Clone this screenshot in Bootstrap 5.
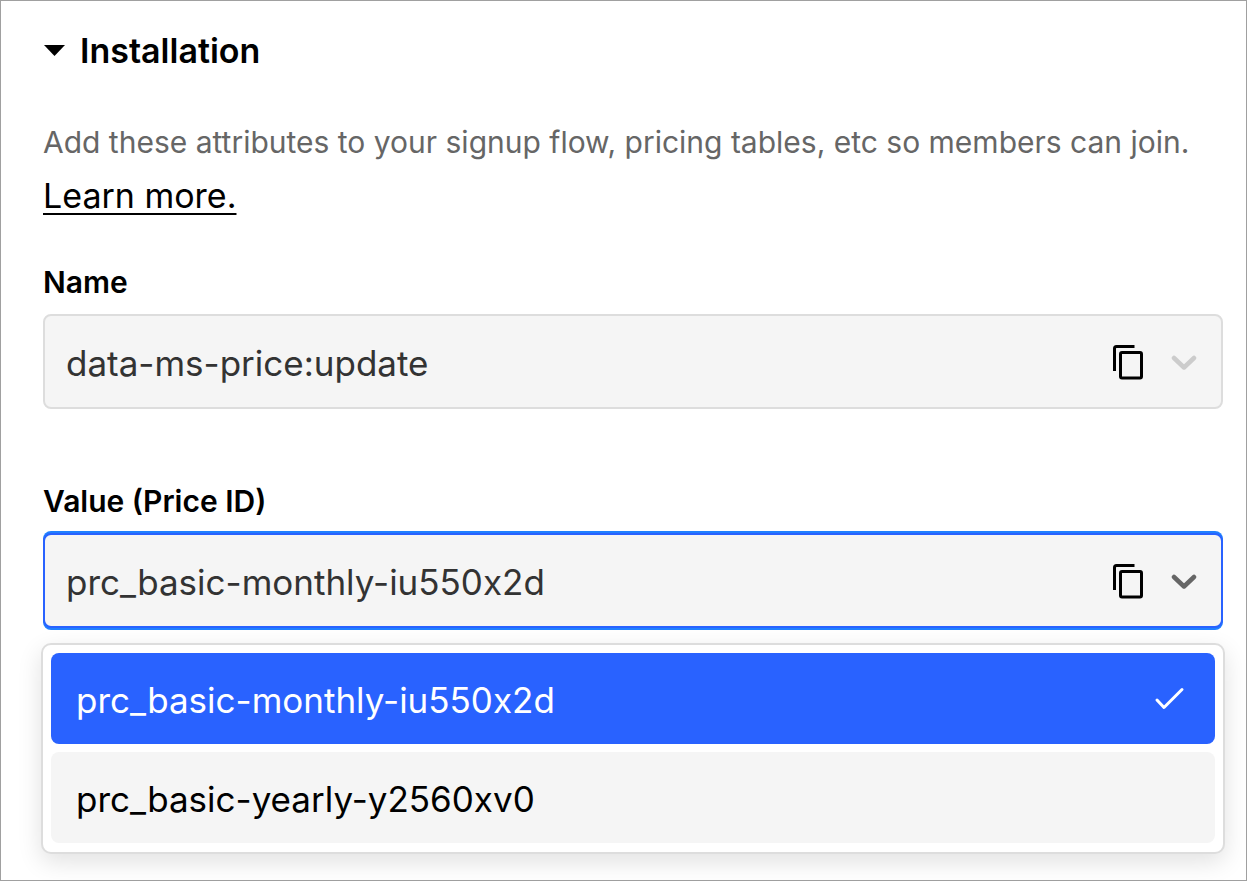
<!DOCTYPE html>
<html lang="en">
<head>
<meta charset="utf-8">
<meta name="viewport" content="width=device-width, initial-scale=1">
<title>Installation</title>
<link href="https://cdn.jsdelivr.net/npm/bootstrap@5.3.0/dist/css/bootstrap.min.css" rel="stylesheet">
<style>
  body { font-family: "Inter", "Liberation Sans", sans-serif; color: #000; background: #fff; }
  .panel { border: 1px solid #a0a0a0; padding: 24px 23px 26px 42px; }
  .panel-title { gap: 15px; font-size: 34px; line-height: 52px; font-weight: 600; margin-bottom: 40px; list-style: none; }
  .intro { font-size: 30px; line-height: 50px; color: #666; margin-bottom: 3px; }
  .learn { font-size: 34px; line-height: 52px; color: #000; text-decoration-thickness: 2px; text-underline-offset: 5px; }
  .field-label { font-size: 30px; line-height: 40px; font-weight: 600; margin-bottom: 12px; }
  .name-field { padding-top: 40px; }
  .value-field { padding-top: 72px; }
  .picker .form-select, .choice { font-size: 35px; line-height: 48px; font-variant-ligatures: no-contextual; }
  .picker .form-select { height: 95px; border: 2px solid #ddd; border-radius: 8px; background: #f5f5f5; color: #333; padding: 3px 140px 0 21px; }
  .picker .form-select.is-open { border-color: #2962ff; box-shadow: 0 -2px #1f80ff, 0 2px #1f80ff; }
  .picker-icons { top: 0; bottom: 0; right: 26px; gap: 23px; }
  .copy-btn { width: 40px; height: 40px; }
  .menu { border: 2px solid #ddd; border-radius: 10px; padding: 8px 8px 9px; gap: 8px; margin: 15px -2px 0; background: #fff; box-shadow: 0 8px 24px rgba(0,0,0,.12); }
  .choice { height: 91px; border: 0; border-radius: 8px; padding: 3px 29px 0 25px; background: #f5f5f5; color: #000; }
  .choice.chosen { background: #2962ff; color: #fff; }
</style>
</head>
<body>
<main class="panel min-vh-100">
  <details open>
    <summary class="panel-title d-flex align-items-center">
      <svg width="22" height="12" viewBox="0 0 22 12" aria-hidden="true"><path d="M1 0H22L11.500 11Z"/></svg>
      <span>Installation</span>
    </summary>
    <p class="intro">Add these attributes to your signup flow, pricing tables, etc so members can join.</p>
    <a class="learn d-inline-block" href="#">Learn more.</a>

    <div class="name-field">
      <label class="field-label d-block" for="attr">Name</label>
      <div class="picker position-relative">
        <select class="form-select" id="attr"><option>data-ms-price:update</option></select>
        <div class="picker-icons position-absolute d-flex align-items-center">
          <button class="copy-btn btn p-0 border-0 d-flex align-items-center justify-content-center" type="button" aria-label="Copy name">
            <svg width="32" height="36" viewBox="0 0 32 36" fill="none" stroke="#000" stroke-width="3"><path d="M2.500 27V4.500Q2.500 2.500 4.500 2.500H22.500"/><rect x="8.500" y="8.500" width="21" height="25.500" rx="1.500"/></svg>
          </button>
          <svg width="26" height="16" viewBox="0 0 26 16" fill="none" stroke="#ccc" stroke-width="4.500" stroke-linecap="round" stroke-linejoin="round" aria-hidden="true"><path d="M3 4L13 13.500L23 4"/></svg>
        </div>
      </div>
    </div>

    <div class="value-field">
      <label class="field-label d-block" for="price">Value (Price ID)</label>
      <div class="picker position-relative">
        <select class="form-select is-open" id="price"><option>prc_basic-monthly-iu550x2d</option><option>prc_basic-yearly-y2560xv0</option></select>
        <div class="picker-icons position-absolute d-flex align-items-center">
          <button class="copy-btn btn p-0 border-0 d-flex align-items-center justify-content-center" type="button" aria-label="Copy value">
            <svg width="32" height="36" viewBox="0 0 32 36" fill="none" stroke="#000" stroke-width="3"><path d="M2.500 27V4.500Q2.500 2.500 4.500 2.500H22.500"/><rect x="8.500" y="8.500" width="21" height="25.500" rx="1.500"/></svg>
          </button>
          <svg width="26" height="16" viewBox="0 0 26 16" fill="none" stroke="#666" stroke-width="4.500" stroke-linecap="round" stroke-linejoin="round" aria-hidden="true"><path d="M3 4L13 13.500L23 4"/></svg>
        </div>
      </div>
      <div class="menu d-flex flex-column">
        <button class="choice chosen d-flex align-items-center justify-content-between" type="button"><span>prc_basic-monthly-iu550x2d</span>
          <svg width="32" height="26" viewBox="0 0 32 26" fill="none" stroke="#fff" stroke-width="3" stroke-linecap="round" stroke-linejoin="round" aria-hidden="true"><path d="M3 13L10 20.500L28 2.500"/></svg>
        </button>
        <button class="choice d-flex align-items-center" type="button"><span>prc_basic-yearly-y2560xv0</span></button>
      </div>
    </div>
  </details>
</main>
<script src="https://cdn.jsdelivr.net/npm/bootstrap@5.3.0/dist/js/bootstrap.bundle.min.js"></script>
</body>
</html>
